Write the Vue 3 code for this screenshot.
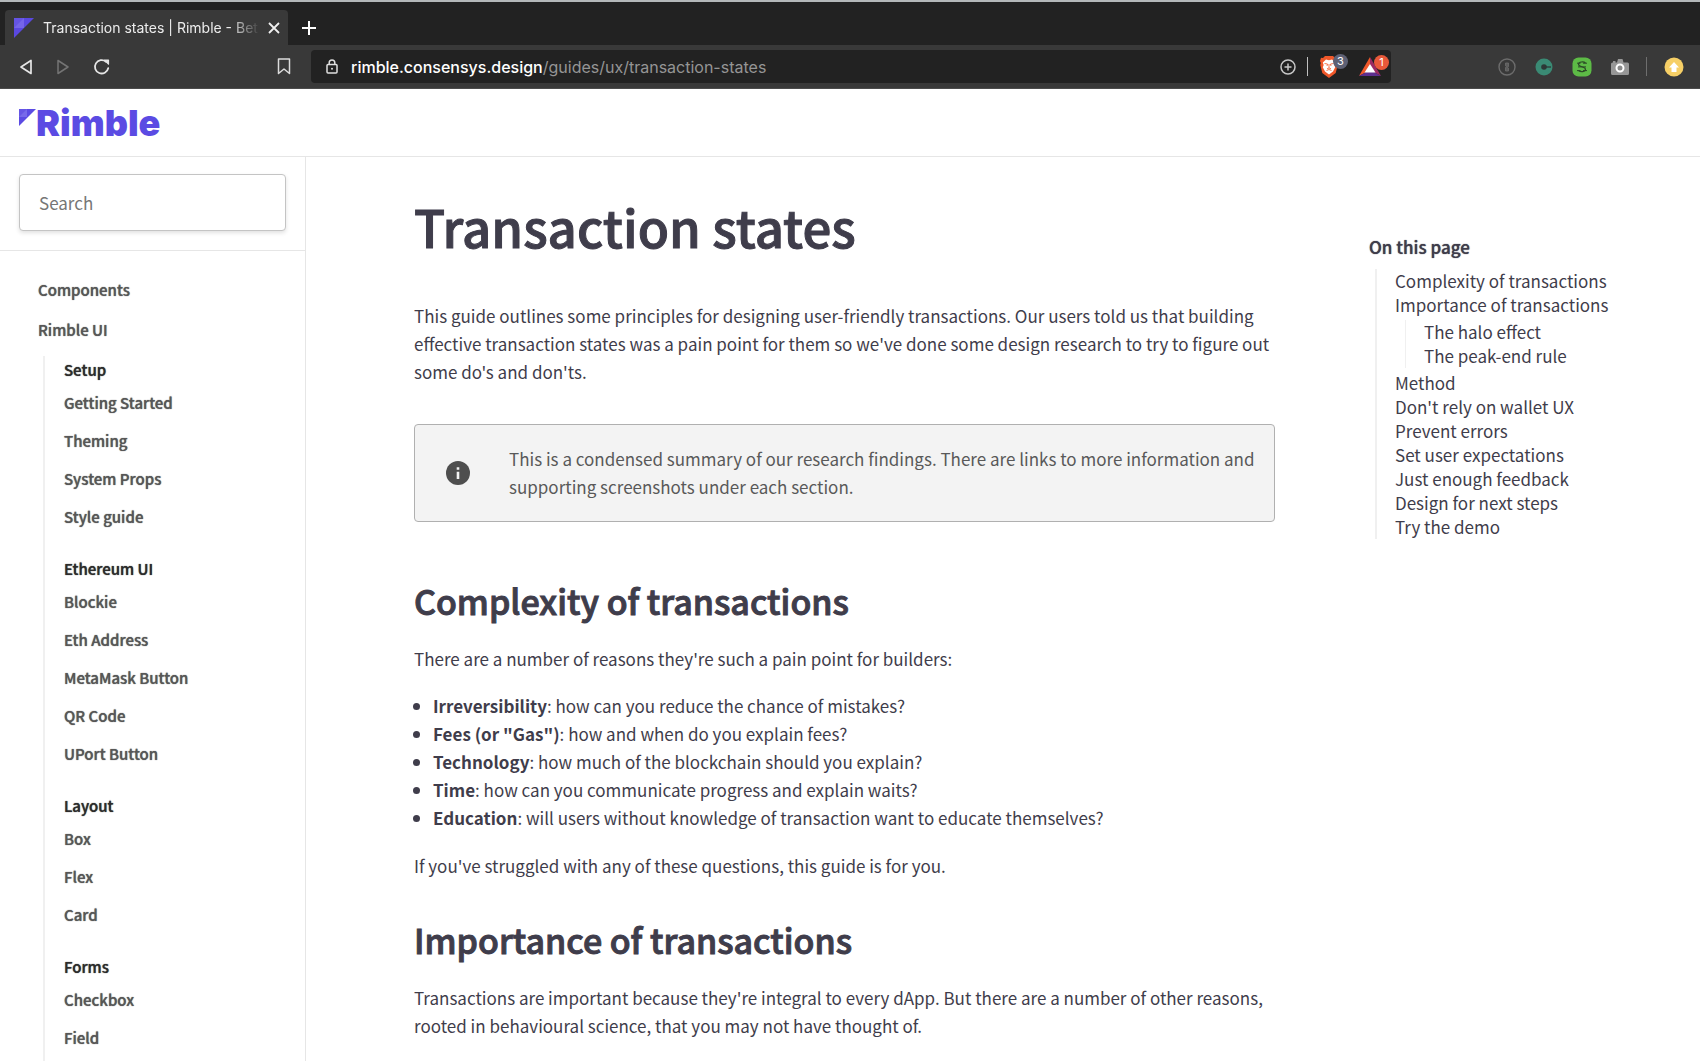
<script setup>
const groups = [
  { title: 'Setup', items: ['Getting Started', 'Theming', 'System Props', 'Style guide'] },
  { title: 'Ethereum UI', items: ['Blockie', 'Eth Address', 'MetaMask Button', 'QR Code', 'UPort Button'] },
  { title: 'Layout', items: ['Box', 'Flex', 'Card'] },
  { title: 'Forms', items: ['Checkbox', 'Field'] },
]
const toc = [
  { label: 'Complexity of transactions' },
  { label: 'Importance of transactions', children: ['The halo effect', 'The peak-end rule'] },
  { label: 'Method' },
  { label: "Don't rely on wallet UX" },
  { label: 'Prevent errors' },
  { label: 'Set user expectations' },
  { label: 'Just enough feedback' },
  { label: 'Design for next steps' },
  { label: 'Try the demo' },
]
const reasons = [
  ['Irreversibility', 'how can you reduce the chance of mistakes?'],
  ['Fees (or "Gas")', 'how and when do you explain fees?'],
  ['Technology', 'how much of the blockchain should you explain?'],
  ['Time', 'how can you communicate progress and explain waits?'],
  ['Education', 'will users without knowledge of transaction want to educate themselves?'],
]
</script>

<template>
  <div class="window">
    <div class="tabs">
      <div class="tab">
        <svg width="20" height="20" viewBox="0 0 20 20"><path d="M0 0h20L0 20z" fill="#5a48e0" /><path d="M0 0h10v10H0z" fill="#6554e4" /><path d="M0 10 10 0v10z" fill="#7565e8" /></svg>
        <span class="tab-title">Transaction states | Rimble - Bet</span>
        <button class="icon" aria-label="Close tab">
          <svg width="12" height="12" viewBox="0 0 12 12" fill="none" stroke="#f0f0f0" stroke-width="1.800"><path d="m1 1 10 10M11 1 1 11" /></svg>
        </button>
      </div>
      <button class="icon" aria-label="New tab">
        <svg width="14" height="14" viewBox="0 0 14 14" fill="none" stroke="#fff" stroke-width="2"><path d="M7 0v14M0 7h14" /></svg>
      </button>
    </div>

    <div class="toolbar">
      <div class="nav-buttons">
        <button class="icon" aria-label="Back">
          <svg width="14" height="16" viewBox="0 0 14 16" fill="none" stroke="#e6e6e6" stroke-width="1.700" stroke-linejoin="round"><path d="M12 1.500v13L2 8z" /></svg>
        </button>
        <button class="icon" aria-label="Forward">
          <svg width="14" height="16" viewBox="0 0 14 16" fill="none" stroke="#747474" stroke-width="1.500" stroke-linejoin="round"><path d="M2 1.500v13L12 8z" /></svg>
        </button>
        <button class="icon" aria-label="Reload">
          <svg width="18" height="18" viewBox="0 0 18 18" fill="none" stroke="#e6e6e6" stroke-width="1.800" stroke-linecap="round"><path d="M15.200 10.200A6.700 6.700 0 1 1 13 3.700" /><path d="M11.500 2.200 15.500 2v4.200z" fill="#e6e6e6" stroke-width="1.200" stroke-linejoin="round" /></svg>
        </button>
      </div>
      <button class="icon bookmark" aria-label="Bookmark">
        <svg width="14" height="17" viewBox="0 0 14 17" fill="none" stroke="#dcdcdc" stroke-width="1.500" stroke-linejoin="round"><path d="M1.500 1h11v14.500L7 11l-5.500 4.500z" /></svg>
      </button>
      <div class="address">
        <svg width="12" height="15" viewBox="0 0 12 15" fill="none" stroke="#e0e0e0" stroke-width="1.500"><rect x="1" y="5.500" width="10" height="8.500" rx="1" /><path d="M3.200 5.500V3.800a2.800 2.800 0 0 1 5.600 0v1.700" /><circle cx="6" cy="9.700" r="1" fill="#e0e0e0" stroke="none" /></svg>
        <span class="url"><b>rimble.consensys.design</b>/guides/ux/transaction-states</span>
        <button class="icon" aria-label="Zoom">
          <svg width="16" height="16" viewBox="0 0 16 16" fill="none" stroke="#c8c8c8" stroke-width="1.500"><circle cx="8" cy="8" r="7" /><path d="M8 4.500v7M4.500 8h7" /></svg>
        </button>
        <i class="bar"></i>
        <button class="icon shield" aria-label="Brave Shields">
          <svg width="18" height="22" viewBox="0 0 18 22"><path d="M5 0h8l2 2 2-.2L18 5l-.8 2 .5 2-2 8L9 22l-6.700-5-2-8 .5-2L0 5l1-3.200L3 2z" fill="#f0582a" /><path d="M9 4.300 6 3.500 2.800 6.500l.9 2.500-.9 2.200 2.200 4.300 4 3 4-3 2.200-4.300-.9-2.200.9-2.500L12 3.500z" fill="#fff" /><path d="m4.500 7.500 3 .5-.5 2M13.500 7.500l-3 .5.500 2M9 8v4M7 12.800l2-.8 2 .8M6.500 14.500 9 13.500l2.500 1" fill="none" stroke="#f0582a" stroke-width=".8" /></svg>
          <span class="count">3</span>
        </button>
        <button class="icon rewards" aria-label="Brave Rewards">
          <svg width="22" height="20" viewBox="0 0 22 20"><path d="M11 0 0 19l11-6z" fill="#f0582a" /><path d="M11 0l11 19-11-6z" fill="#9b2a62" /><path d="M0 19h22l-11-6z" fill="#5d2f8f" /><path d="m11 7-5.500 8.500h11z" fill="#fff" /></svg>
          <span class="count hot">1</span>
        </button>
      </div>
      <div class="extensions">
        <button class="icon" aria-label="Password manager">
          <svg width="18" height="18" viewBox="0 0 18 18" fill="none" stroke="#6c6c6c"><circle cx="9" cy="9" r="8" stroke-width="1.400" /><path d="M7.500 5h3v3.500l-1 .8 1 .8V13h-3V9.500l1-.8-1-.8z" fill="#5c5c5c" stroke-width=".8" /></svg>
        </button>
        <button class="icon" aria-label="Key extension">
          <svg width="18" height="18" viewBox="0 0 18 18"><circle cx="9" cy="9" r="8.500" fill="#3a8a74" /><circle cx="9" cy="9" r="2.800" fill="#2d3836" /><path d="M9 9h7" stroke="#2d3836" stroke-width="1.300" /></svg>
        </button>
        <button class="icon" aria-label="Coupons">
          <svg width="20" height="20" viewBox="0 0 20 20"><rect x=".5" y=".5" width="19" height="19" rx="6" fill="#5dbb46" /><g fill="none" stroke="#2c4a28" stroke-width="1.200"><path d="M13.500 6.200C12 4.300 6.500 4.500 6.500 7.300c0 2.900 7 2 7 5 0 2.800-5 3-7 1.200" /><path d="M5 6.200h3.500M11 6.200h4M6 9.900h8M5 13.600h3.500M11 13.600h4" stroke-width="1" /></g></svg>
        </button>
        <button class="icon" aria-label="Screenshot">
          <svg width="18" height="18" viewBox="0 0 18 18"><path d="M1.500 4.500H2V3h2.500v1.500H6L7 1h4.500l1 3.500h4A1.500 1.500 0 0 1 18 6v9.500a1.500 1.500 0 0 1-1.500 1.500h-15A1.500 1.500 0 0 1 0 15.500V6a1.500 1.500 0 0 1 1.500-1.500z" fill="#979797" /><circle cx="9" cy="10" r="3.500" fill="#8a8a8a" stroke="#fff" stroke-width="2" /></svg>
        </button>
        <i class="bar dim"></i>
        <button class="icon" aria-label="Update">
          <svg width="20" height="20" viewBox="0 0 20 20"><circle cx="10" cy="10" r="9.500" fill="#f6cf66" /><path d="m10 5 5 5.500h-2.500V15h-5v-4.500H5z" fill="#fff" /></svg>
        </button>
      </div>
    </div>

    <header class="site-header">
      <a href="#" class="logo">
        <svg width="17" height="17" viewBox="0 0 17 17"><path d="M0 0h17L0 17z" fill="#5b4be3" /><path d="M0 0h8v8H0z" fill="#6656e5" /><path d="M0 8 8 0v8z" fill="#776aea" /></svg>
        <span>Rimble</span>
      </a>
    </header>

    <div class="page">
      <aside class="sidebar">
        <div class="search"><input type="search" placeholder="Search" aria-label="Search" /></div>
        <nav class="menu">
          <a href="#" class="top">Components</a>
          <a href="#" class="top">Rimble UI</a>
          <div class="groups">
            <section v-for="g in groups" :key="g.title">
              <h4>{{ g.title }}</h4>
              <a v-for="i in g.items" :key="i" href="#">{{ i }}</a>
            </section>
          </div>
        </nav>
      </aside>

      <main class="article">
        <h1>Transaction states</h1>
        <p>This guide outlines some principles for designing user-friendly transactions. Our users told us that building effective transaction states was a pain point for them so we've done some design research to try to figure out some do's and don'ts.</p>
        <div class="note">
          <svg width="24" height="24" viewBox="0 0 24 24"><circle cx="12" cy="12" r="12" fill="#4e4e4e" /><path d="M10.700 6.200h2.600v2.500h-2.600zM10.700 10.800h2.600v7.200h-2.600z" fill="#f3f3f3" /></svg>
          <p>This is a condensed summary of our research findings. There are links to more information and supporting screenshots under each section.</p>
        </div>
        <h2>Complexity of transactions</h2>
        <p>There are a number of reasons they're such a pain point for builders:</p>
        <ul>
          <li v-for="r in reasons" :key="r[0]"><strong>{{ r[0] }}</strong>: {{ r[1] }}</li>
        </ul>
        <p>If you've struggled with any of these questions, this guide is for you.</p>
        <h2>Importance of transactions</h2>
        <p>Transactions are important because they're integral to every dApp. But there are a number of other reasons, rooted in behavioural science, that you may not have thought of.</p>
      </main>

      <nav class="toc">
        <h3>On this page</h3>
        <ul>
          <li v-for="t in toc" :key="t.label">
            <a href="#">{{ t.label }}</a>
            <ul v-if="t.children">
              <li v-for="c in t.children" :key="c"><a href="#">{{ c }}</a></li>
            </ul>
          </li>
        </ul>
      </nav>
    </div>
  </div>
</template>

<style>
body {
  margin: 0;
  background: #fff;
}
</style>

<style scoped>
.window {
  height: 100vh;
  display: flex;
  flex-direction: column;
  overflow: hidden;
  box-sizing: border-box;
  border-top: 2px solid #b4b8ba;
  color: #3f3d4b;
  font: 17px/28px "Noto Sans CJK SC", "Noto Sans", sans-serif;
}
a {
  color: inherit;
  text-decoration: none;
}
.icon {
  display: flex;
  align-items: center;
  border: 0;
  padding: 0;
  background: none;
  flex: none;
}
svg {
  display: block;
  flex: none;
}
.tabs {
  display: flex;
  align-items: center;
  gap: 14px;
  height: 43px;
  box-sizing: border-box;
  padding: 8px 0 0 5px;
  background: #222;
  flex: none;
}
.tab {
  display: flex;
  align-items: center;
  box-sizing: border-box;
  width: 283px;
  height: 35px;
  padding: 0 8px 0 9px;
  background: #393939;
  border-radius: 4px 4px 0 0;
  font: 14px/20px Inter, sans-serif;
  color: #ececec;
}
.tab-title {
  flex: 1;
  margin: 0 8px 0 9px;
  white-space: nowrap;
  mask-image: linear-gradient(to right, #000 86%, transparent);
}
.toolbar {
  display: flex;
  align-items: center;
  height: 44px;
  box-sizing: border-box;
  padding: 0 16px 0 19px;
  background: #393939;
  border-bottom: 1px solid #4c4c4c;
  flex: none;
}
.nav-buttons {
  display: flex;
  gap: 23px;
}
.bookmark {
  margin: 0 20px 0 166px;
}
.address {
  display: flex;
  align-items: center;
  flex: 1;
  height: 33px;
  box-sizing: border-box;
  padding: 0 2px 0 15px;
  background: #222;
  border-radius: 4px;
}
.url {
  flex: 1;
  margin-left: 13px;
  font: 16px/24px Inter, sans-serif;
  color: #959595;
}
.url b {
  font-weight: 500;
  color: #fff;
}
.bar {
  width: 1px;
  height: 19px;
  margin: 0 12px 0 11px;
  background: #c0c0c0;
}
.bar.dim {
  margin: 0 -2px;
  background: #6e6e6e;
}
.shield,
.rewards {
  position: relative;
  width: 28px;
}
.rewards {
  width: 30px;
  margin-left: 11px;
}
.count {
  position: absolute;
  top: -2px;
  right: 0;
  width: 15px;
  height: 15px;
  border-radius: 8px;
  background: #5e6175;
  color: #fff;
  font: 11px/15px Inter, sans-serif;
  text-align: center;
}
.count.hot {
  background: #e8593a;
}
.extensions {
  display: flex;
  align-items: center;
  gap: 19px;
  margin-left: 107px;
}
.site-header {
  display: flex;
  align-items: center;
  height: 68px;
  box-sizing: border-box;
  padding-left: 19px;
  border-bottom: 1px solid #e6e6e6;
  flex: none;
}
.logo {
  display: flex;
  color: #5b4be3;
  font: 900 36px/34px Inter, sans-serif;
}
.logo svg {
  margin-top: 3px;
}
.page {
  display: flex;
  flex: 1;
  min-height: 0;
}
.sidebar {
  width: 305px;
  border-right: 1px solid #e6e6e6;
  flex: none;
  font-size: 15px;
  font-weight: 500;
  color: #575757;
}
.search {
  padding: 17px 19px 19px;
  border-bottom: 1px solid #e6e6e6;
}
.search input {
  width: 100%;
  height: 57px;
  box-sizing: border-box;
  padding: 0 19px;
  border: 1px solid #c4c4c4;
  border-radius: 4px;
  box-shadow: 0 2px 4px rgba(0, 0, 0, 0.12);
  appearance: none;
  background: #fff;
  font: inherit;
  font-size: 17px;
  font-weight: 400;
}
.search input::placeholder {
  color: #767676;
  opacity: 1;
}
.menu {
  padding-top: 19px;
}
/* Medium weight thickened towards semibold */
.menu,
.toc h3 {
  text-shadow: 0 0 1px currentColor;
}
.menu a {
  display: block;
  line-height: 38px;
}
.menu a.top {
  padding-left: 38px;
  line-height: 40px;
}
.groups {
  margin: 6px 0 0 43px;
  padding-left: 19px;
  border-left: 2px solid #f0f0f0;
}
.groups section {
  padding-bottom: 19px;
}
.groups h4 {
  margin: 0;
  font-size: 15px;
  font-weight: 500;
  line-height: 28px;
  color: #2c2c2c;
}
.article {
  flex: 1;
  padding: 35px 94px 0 108px;
}
h1,
h2 {
  margin: 0;
  font-weight: 500;
  -webkit-text-stroke: 1px currentColor;
}
h1 {
  font-size: 51px;
  line-height: 68px;
}
h2 {
  font-size: 34px;
  line-height: 48px;
}
.article p {
  margin: 0;
}
.article h1 + p {
  margin-top: 42px;
}
.note {
  display: flex;
  align-items: center;
  gap: 39px;
  margin: 38px 0 55px;
  padding: 20px 15px 20px 31px;
  border: 1px solid #b0b0b0;
  border-radius: 4px;
  background: #f3f3f3;
  color: #595959;
}
.article h2 + p {
  margin-top: 20px;
}
.article ul {
  margin: 19px 0 20px;
  padding-left: 19px;
}
.article p + h2 {
  margin-top: 36px;
}
.toc {
  width: 331px;
  padding-top: 76px;
  flex: none;
}
.toc h3 {
  margin: 0 0 8px;
  font-size: 17px;
  font-weight: 500;
  line-height: 28px;
}
.toc ul {
  margin: 0 0 0 6px;
  padding: 0 0 0 18px;
  border-left: 2px solid #f0f0f0;
  list-style: none;
  line-height: 24px;
}
.toc ul ul {
  margin: 3px 0 3px 10px;
  border-left-width: 1px;
}
.toc a {
  display: block;
}
</style>
